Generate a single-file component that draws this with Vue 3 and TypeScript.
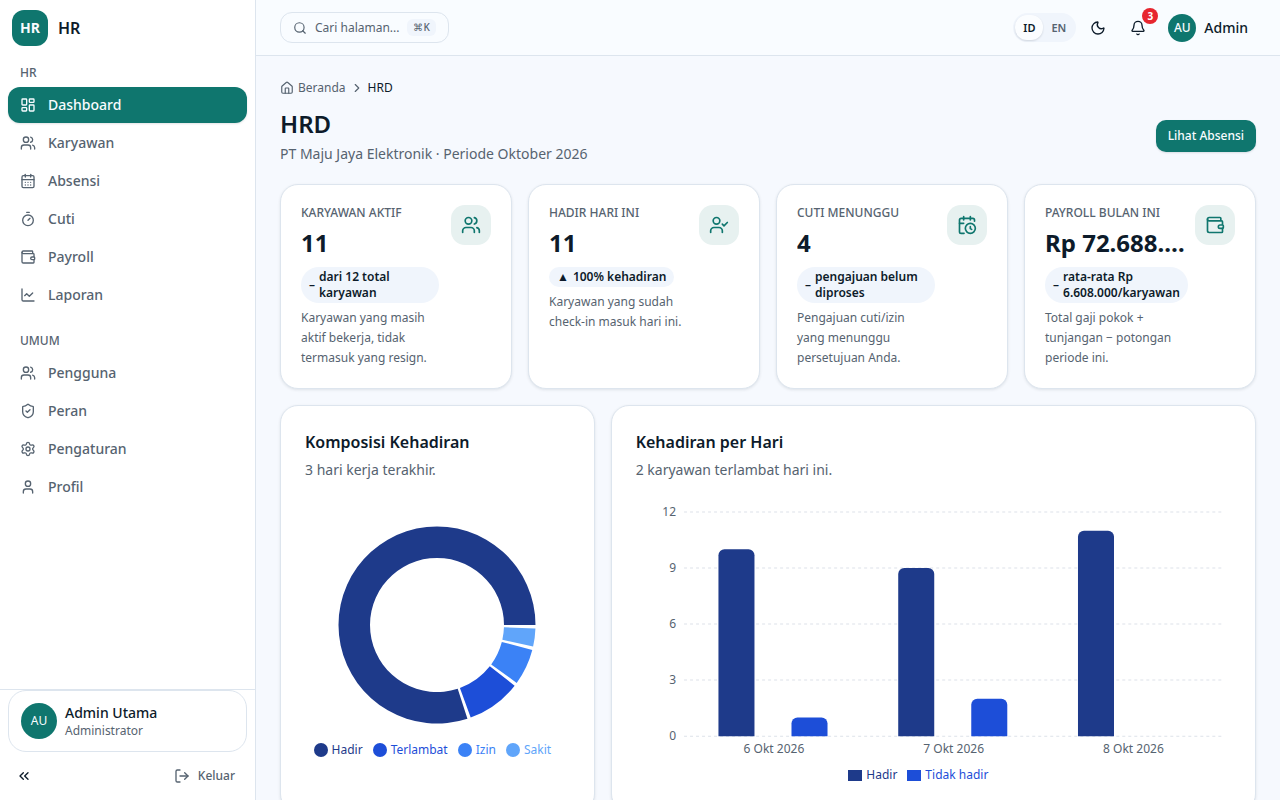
<script setup lang="ts">
import { computed, ref } from 'vue'

type IconName =
  | 'dashboard' | 'users' | 'calendar' | 'timer' | 'wallet' | 'chart' | 'shield' | 'settings'
  | 'user' | 'userCheck' | 'calendarClock' | 'moon' | 'bell' | 'search' | 'home'
  | 'chevronRight' | 'chevronsLeft' | 'logout'

const icons: Record<IconName, string[]> = {
  dashboard: [
    'M4 3h5a1 1 0 0 1 1 1v7a1 1 0 0 1-1 1H4a1 1 0 0 1-1-1V4a1 1 0 0 1 1-1z',
    'M15 3h5a1 1 0 0 1 1 1v3a1 1 0 0 1-1 1h-5a1 1 0 0 1-1-1V4a1 1 0 0 1 1-1z',
    'M15 12h5a1 1 0 0 1 1 1v7a1 1 0 0 1-1 1h-5a1 1 0 0 1-1-1v-7a1 1 0 0 1 1-1z',
    'M4 16h5a1 1 0 0 1 1 1v3a1 1 0 0 1-1 1H4a1 1 0 0 1-1-1v-3a1 1 0 0 1 1-1z',
  ],
  users: [
    'M16 21v-2a4 4 0 0 0-4-4H6a4 4 0 0 0-4 4v2',
    'M5 7a4 4 0 1 0 8 0a4 4 0 1 0-8 0',
    'M22 21v-2a4 4 0 0 0-3-3.87',
    'M16 3.13a4 4 0 0 1 0 7.75',
  ],
  calendar: [
    'M8 2v4', 'M16 2v4',
    'M5 4h14a2 2 0 0 1 2 2v14a2 2 0 0 1-2 2H5a2 2 0 0 1-2-2V6a2 2 0 0 1 2-2z',
    'M3 10h18', 'M8 14h.01', 'M12 14h.01', 'M16 14h.01', 'M8 18h.01', 'M12 18h.01', 'M16 18h.01',
  ],
  timer: ['M10 2h4', 'M12 14l3-3', 'M4 14a8 8 0 1 0 16 0a8 8 0 1 0-16 0'],
  wallet: [
    'M19 7V4a1 1 0 0 0-1-1H5a2 2 0 0 0 0 4h15a1 1 0 0 1 1 1v4h-3a2 2 0 0 0 0 4h3a1 1 0 0 0 1-1v-2a1 1 0 0 0-1-1',
    'M3 5v14a2 2 0 0 0 2 2h15a1 1 0 0 0 1-1v-4',
  ],
  chart: ['M3 3v16a2 2 0 0 0 2 2h16', 'm19 9-5 5-4-4-3 3'],
  shield: [
    'M20 13c0 5-3.5 7.5-7.66 8.95a1 1 0 0 1-.67-.01C7.5 20.5 4 18 4 13V6a1 1 0 0 1 1-1c2 0 4.5-1.2 6.24-2.72a1.17 1.17 0 0 1 1.52 0C14.51 3.81 17 5 19 5a1 1 0 0 1 1 1z',
    'm9 12 2 2 4-4',
  ],
  settings: [
    'M9.671 4.136a2.34 2.34 0 0 1 4.659 0 2.34 2.34 0 0 0 3.319 1.915 2.34 2.34 0 0 1 2.33 4.033 2.34 2.34 0 0 0 0 3.831 2.34 2.34 0 0 1-2.33 4.033 2.34 2.34 0 0 0-3.319 1.915 2.34 2.34 0 0 1-4.659 0 2.34 2.34 0 0 0-3.32-1.915 2.34 2.34 0 0 1-2.33-4.033 2.34 2.34 0 0 0 0-3.831A2.34 2.34 0 0 1 6.35 6.051a2.34 2.34 0 0 0 3.319-1.915',
    'M9 12a3 3 0 1 0 6 0a3 3 0 1 0-6 0',
  ],
  user: ['M19 21v-2a4 4 0 0 0-4-4H9a4 4 0 0 0-4 4v2', 'M8 7a4 4 0 1 0 8 0a4 4 0 1 0-8 0'],
  userCheck: ['m16 11 2 2 4-4', 'M16 21v-2a4 4 0 0 0-4-4H6a4 4 0 0 0-4 4v2', 'M5 7a4 4 0 1 0 8 0a4 4 0 1 0-8 0'],
  calendarClock: [
    'M16 14v2.2l1.6 1', 'M16 2v4', 'M21 7.5V6a2 2 0 0 0-2-2H5a2 2 0 0 0-2 2v14a2 2 0 0 0 2 2h3.5',
    'M3 10h5', 'M8 2v4', 'M10 16a6 6 0 1 0 12 0a6 6 0 1 0-12 0',
  ],
  moon: ['M20.985 12.486a9 9 0 1 1-9.473-9.472c.405-.022.617.46.402.803a6 6 0 0 0 8.268 8.268c.344-.215.825-.004.803.401'],
  bell: [
    'M10.268 21a2 2 0 0 0 3.464 0',
    'M3.262 15.326A1 1 0 0 0 4 17h16a1 1 0 0 0 .74-1.673C19.41 13.956 18 12.499 18 8A6 6 0 0 0 6 8c0 4.499-1.411 5.956-2.738 7.326',
  ],
  search: ['m21 21-4.34-4.34', 'M3 11a8 8 0 1 0 16 0a8 8 0 1 0-16 0'],
  home: [
    'M15 21v-8a1 1 0 0 0-1-1h-4a1 1 0 0 0-1 1v8',
    'M3 10a2 2 0 0 1 .709-1.528l7-5.999a2 2 0 0 1 2.582 0l7 5.999A2 2 0 0 1 21 10v9a2 2 0 0 1-2 2H5a2 2 0 0 1-2-2z',
  ],
  chevronRight: ['m9 18 6-6-6-6'],
  chevronsLeft: ['m11 17-5-5 5-5', 'm18 17-5-5 5-5'],
  logout: ['m16 17 5-5-5-5', 'M21 12H9', 'M9 21H5a2 2 0 0 1-2-2V5a2 2 0 0 1 2-2h4'],
}

interface NavItem { label: string; icon: IconName }
interface NavSection { title: string; items: NavItem[] }

const sections: NavSection[] = [
  {
    title: 'HR',
    items: [
      { label: 'Dashboard', icon: 'dashboard' },
      { label: 'Karyawan', icon: 'users' },
      { label: 'Absensi', icon: 'calendar' },
      { label: 'Cuti', icon: 'timer' },
      { label: 'Payroll', icon: 'wallet' },
      { label: 'Laporan', icon: 'chart' },
    ],
  },
  {
    title: 'UMUM',
    items: [
      { label: 'Pengguna', icon: 'users' },
      { label: 'Peran', icon: 'shield' },
      { label: 'Pengaturan', icon: 'settings' },
      { label: 'Profil', icon: 'user' },
    ],
  },
]
const active = ref('Dashboard')
const lang = ref<'ID' | 'EN'>('ID')
const langs = ['ID', 'EN'] as const

interface Stat { label: string; value: string; mark: string; note: string; text: string; icon: IconName }
const stats: Stat[] = [
  { label: 'KARYAWAN AKTIF', value: '11', mark: '–', note: 'dari 12 total karyawan', text: 'Karyawan yang masih aktif bekerja, tidak termasuk yang resign.', icon: 'users' },
  { label: 'HADIR HARI INI', value: '11', mark: '▲', note: '100% kehadiran', text: 'Karyawan yang sudah check-in masuk hari ini.', icon: 'userCheck' },
  { label: 'CUTI MENUNGGU', value: '4', mark: '–', note: 'pengajuan belum diproses', text: 'Pengajuan cuti/izin yang menunggu persetujuan Anda.', icon: 'calendarClock' },
  { label: 'PAYROLL BULAN INI', value: 'Rp 72.688.000', mark: '–', note: 'rata-rata Rp 6.608.000/karyawan', text: 'Total gaji pokok + tunjangan − potongan periode ini.', icon: 'wallet' },
]

const composition = [
  { label: 'Hadir', value: 27, color: '#1e3a8a' },
  { label: 'Terlambat', value: 3, color: '#1d4ed8' },
  { label: 'Izin', value: 2, color: '#3b82f6' },
  { label: 'Sakit', value: 1, color: '#60a5fa' },
]

/* Ring sectors run counter-clockwise from three o'clock with a 2 degree gap. */
const sectors = computed(() => {
  const outer = 98.5
  const inner = 67
  const gap = 2
  const total = composition.reduce((sum, c) => sum + c.value, 0)
  const at = (r: number, deg: number) => {
    const a = (deg * Math.PI) / 180
    return `${(100 + r * Math.cos(a)).toFixed(2)} ${(100 - r * Math.sin(a)).toFixed(2)}`
  }
  let start = 0
  return composition.map((c) => {
    const sweep = (c.value / total) * (360 - gap * composition.length)
    const end = start + sweep
    const large = sweep > 180 ? 1 : 0
    const d = `M${at(outer, start)}A${outer} ${outer} 0 ${large} 0 ${at(outer, end)}L${at(inner, end)}A${inner} ${inner} 0 ${large} 1 ${at(inner, start)}Z`
    start = end + gap
    return { label: c.label, color: c.color, d }
  })
})

const days = [
  { label: '6 Okt 2026', present: 10, absent: 1 },
  { label: '7 Okt 2026', present: 9, absent: 2 },
  { label: '8 Okt 2026', present: 11, absent: 0 },
]
const plot = { left: 48, right: 587, top: 8, bottom: 232, max: 12 }
const yOf = (v: number) => plot.bottom - (v / plot.max) * (plot.bottom - plot.top)
const ticks = [0, 3, 6, 9, 12].map((v) => ({ v, y: yOf(v) }))
const barPath = (x: number, v: number) => {
  const w = 36
  const r = 6
  const y = yOf(v)
  return `M${x} ${plot.bottom}V${y + r}a${r} ${r} 0 0 1 ${r} ${-r}h${w - 2 * r}a${r} ${r} 0 0 1 ${r} ${r}V${plot.bottom}Z`
}
const groups = computed(() => {
  const band = (plot.right - plot.left) / days.length
  return days.map((d, i) => {
    const x = plot.left + band * i
    return {
      label: d.label,
      center: x + band / 2,
      present: barPath(x + 34.4, d.present),
      absent: d.absent > 0 ? barPath(x + 107.4, d.absent) : '',
    }
  })
})
</script>

<template>
  <div class="shell">
    <aside class="sidebar">
      <div class="brand">
        <span class="brand-mark">HR</span>
        <span class="brand-name">HR</span>
      </div>
      <nav class="nav" aria-label="Menu utama">
        <section v-for="s in sections" :key="s.title" class="nav-section">
          <h2 class="nav-title">{{ s.title }}</h2>
          <ul class="nav-list">
            <li v-for="item in s.items" :key="item.label">
              <a href="#" class="nav-link" :class="{ active: active === item.label }" @click.prevent="active = item.label">
                <svg class="icon i16" viewBox="0 0 24 24" aria-hidden="true"><path v-for="p in icons[item.icon]" :key="p" :d="p" /></svg>
                {{ item.label }}
              </a>
            </li>
          </ul>
        </section>
      </nav>
      <div class="side-foot">
        <a href="#" class="user-card">
          <span class="avatar a36">AU</span>
          <span class="user-text">
            <span class="user-name">Admin Utama</span>
            <span class="user-role">Administrator</span>
          </span>
        </a>
        <div class="foot-row">
          <button type="button" class="collapse" aria-label="Ciutkan menu">
            <svg class="icon i16" viewBox="0 0 24 24" aria-hidden="true"><path v-for="p in icons.chevronsLeft" :key="p" :d="p" /></svg>
          </button>
          <button type="button" class="logout">
            <svg class="icon i16" viewBox="0 0 24 24" aria-hidden="true"><path v-for="p in icons.logout" :key="p" :d="p" /></svg>
            Keluar
          </button>
        </div>
      </div>
    </aside>

    <div class="page">
      <header class="topbar">
        <button type="button" class="search">
          <svg class="icon i14" viewBox="0 0 24 24" aria-hidden="true"><path v-for="p in icons.search" :key="p" :d="p" /></svg>
          <span>Cari halaman...</span>
          <kbd>⌘K</kbd>
        </button>
        <div class="tools">
          <div class="langs">
            <button v-for="l in langs" :key="l" type="button" :class="{ on: lang === l }" @click="lang = l">{{ l }}</button>
          </div>
          <button type="button" class="tool" aria-label="Mode gelap">
            <svg class="icon i16" viewBox="0 0 24 24" aria-hidden="true"><path v-for="p in icons.moon" :key="p" :d="p" /></svg>
          </button>
          <button type="button" class="tool" aria-label="Notifikasi">
            <svg class="icon i16" viewBox="0 0 24 24" aria-hidden="true"><path v-for="p in icons.bell" :key="p" :d="p" /></svg>
            <span class="count">3</span>
          </button>
          <button type="button" class="account">
            <span class="avatar a28">AU</span>
            Admin
          </button>
        </div>
      </header>

      <main class="content">
        <nav class="crumbs" aria-label="Breadcrumb">
          <a href="#" class="crumb">
            <svg class="icon i14" viewBox="0 0 24 24" aria-hidden="true"><path v-for="p in icons.home" :key="p" :d="p" /></svg>
            Beranda
          </a>
          <svg class="icon i14" viewBox="0 0 24 24" aria-hidden="true"><path v-for="p in icons.chevronRight" :key="p" :d="p" /></svg>
          <span class="crumb-now">HRD</span>
        </nav>
        <div class="heading">
          <div>
            <h1>HRD</h1>
            <p>PT Maju Jaya Elektronik · Periode Oktober 2026</p>
          </div>
          <button type="button" class="primary">Lihat Absensi</button>
        </div>

        <div class="stats">
          <article v-for="s in stats" :key="s.label" class="card stat">
            <div class="stat-body">
              <h2 class="stat-label">{{ s.label }}</h2>
              <p class="stat-value">{{ s.value }}</p>
              <p class="pill"><span>{{ s.mark }}</span><span>{{ s.note }}</span></p>
              <p class="stat-text">{{ s.text }}</p>
            </div>
            <span class="stat-icon">
              <svg class="icon i20" viewBox="0 0 24 24" aria-hidden="true"><path v-for="p in icons[s.icon]" :key="p" :d="p" /></svg>
            </span>
          </article>
        </div>

        <div class="charts">
          <section class="card chart">
            <h2>Komposisi Kehadiran</h2>
            <p>3 hari kerja terakhir.</p>
            <div class="ring">
              <svg viewBox="0 0 200 200" role="img" aria-label="Komposisi Kehadiran">
                <path v-for="s in sectors" :key="s.label" :d="s.d" :fill="s.color" />
              </svg>
              <ul class="legend">
                <li v-for="c in composition" :key="c.label" :style="{ color: c.color }"><i class="dot"></i>{{ c.label }}</li>
              </ul>
            </div>
          </section>
          <section class="card chart wide">
            <h2>Kehadiran per Hari</h2>
            <p>2 karyawan terlambat hari ini.</p>
            <div class="bars">
              <svg viewBox="0 0 595 259" role="img" aria-label="Kehadiran per Hari">
                <g v-for="t in ticks" :key="t.v">
                  <line :x1="plot.left" :x2="plot.right" :y1="t.y" :y2="t.y" class="grid-line" />
                  <text x="40" :y="t.y + 4" text-anchor="end">{{ t.v }}</text>
                </g>
                <g v-for="g in groups" :key="g.label">
                  <path :d="g.present" fill="#1e3a8a" />
                  <path v-if="g.absent" :d="g.absent" fill="#1d4ed8" />
                  <text :x="g.center" y="249" text-anchor="middle">{{ g.label }}</text>
                </g>
              </svg>
              <ul class="legend">
                <li class="present"><i class="swatch"></i>Hadir</li>
                <li class="absent"><i class="swatch"></i>Tidak hadir</li>
              </ul>
            </div>
          </section>
        </div>
      </main>
    </div>
  </div>
</template>

<style>
html { scrollbar-width: none; }
body { margin: 0; background: #f6f9fe; }
</style>

<style scoped>
.shell {
  --ink: #0d1b2a;
  --muted: #566370;
  --line: #dde5ee;
  --brand: #0f766e;
  --tint: #f0f5fc;
  display: flex;
  min-height: 100vh;
  font-family: "Noto Sans", "Liberation Sans", sans-serif;
  font-size: 14px;
  line-height: 20px;
  color: var(--ink);
}
*, *::before, *::after { box-sizing: border-box; }
h1, h2, p, ul { margin: 0; padding: 0; }
ul { list-style: none; }
a { color: inherit; text-decoration: none; }
button { font: inherit; color: inherit; background: none; border: 0; padding: 0; cursor: pointer; }
.icon { flex: none; fill: none; stroke: currentColor; stroke-width: 2; stroke-linecap: round; stroke-linejoin: round; }
.i14 { width: 14px; height: 14px; }
.i16 { width: 16px; height: 16px; }
.i20 { width: 20px; height: 20px; }

.sidebar {
  position: sticky;
  top: 0;
  flex: none;
  display: flex;
  flex-direction: column;
  width: 256px;
  height: 100vh;
  background: #fff;
  border-right: 1px solid var(--line);
}
.brand { display: flex; align-items: center; gap: 10px; height: 56px; padding: 0 12px; }
.brand-mark {
  display: grid;
  place-items: center;
  width: 36px;
  height: 36px;
  border-radius: 12px;
  background: var(--brand);
  color: #f8fcff;
  font-weight: 700;
}
.brand-name { font-size: 16px; font-weight: 600; }
.nav { flex: 1; overflow: hidden; padding: 9px 8px; }
.nav-section + .nav-section { margin-top: 20px; }
.nav-title { padding: 0 12px 6px; font-size: 12px; line-height: 16px; font-weight: 500; color: var(--muted); }
.nav-list { display: grid; gap: 2px; }
.nav-link {
  display: flex;
  align-items: center;
  gap: 12px;
  height: 36px;
  padding: 0 12px;
  border-radius: 12px;
  font-weight: 500;
  color: var(--muted);
}
.nav-link.active { background: var(--brand); color: #f8fcff; box-shadow: 0 1px 2px rgba(13, 27, 42, 0.12); }
.side-foot { border-top: 1px solid var(--line); padding: 0 8px 8px; }
.user-card {
  display: flex;
  align-items: center;
  gap: 8px;
  padding: 12px;
  border: 1px solid var(--line);
  border-radius: 18px;
}
.avatar {
  flex: none;
  display: grid;
  place-items: center;
  border-radius: 50%;
  background: var(--brand);
  color: #f8fcff;
  font-size: 12px;
  line-height: 16px;
  font-weight: 400;
}
.a36 { width: 36px; height: 36px; }
.a28 { width: 28px; height: 28px; font-weight: 500; }
.user-text { display: grid; }
.user-name { font-weight: 500; }
.user-role { font-size: 12px; line-height: 16px; color: var(--muted); }
.foot-row { display: flex; justify-content: space-between; margin-top: 8px; }
.collapse { display: grid; place-items: center; width: 32px; height: 32px; }
.logout {
  display: flex;
  align-items: center;
  gap: 8px;
  height: 32px;
  padding: 0 12px;
  font-size: 12px;
  font-weight: 500;
  color: var(--muted);
}

.page { flex: 1; min-width: 0; }
.topbar {
  position: sticky;
  top: 0;
  z-index: 1;
  display: flex;
  align-items: center;
  justify-content: space-between;
  height: 56px;
  padding: 0 24px;
  background: #f9fcff;
  border-bottom: 1px solid var(--line);
}
.search {
  display: flex;
  align-items: center;
  gap: 8px;
  height: 31px;
  padding: 0 12px;
  border: 1px solid var(--line);
  border-radius: 12px;
  font-size: 12px;
  color: var(--muted);
}
.search kbd {
  padding: 0 6px;
  border-radius: 6px;
  background: var(--tint);
  font: 500 10px/17px "Noto Sans", "Liberation Sans", sans-serif;
}
.tools { display: flex; align-items: center; gap: 4px; }
.langs { display: flex; padding: 2px; border-radius: 15px; background: var(--tint); }
.langs button {
  height: 25px;
  padding: 0 8px;
  border-radius: 12px;
  font-size: 11px;
  font-weight: 600;
  color: var(--muted);
}
.langs .on { background: #fbfdff; color: var(--ink); box-shadow: 0 1px 2px rgba(13, 27, 42, 0.14); }
.tool { position: relative; display: grid; place-items: center; width: 36px; height: 36px; }
.count {
  position: absolute;
  top: -2px;
  right: -2px;
  width: 16px;
  height: 16px;
  border-radius: 50%;
  background: #e7262f;
  color: #fff;
  font-size: 10px;
  line-height: 16px;
  font-weight: 700;
  text-align: center;
}
.account { display: flex; align-items: center; gap: 8px; height: 36px; padding: 0 8px; font-weight: 500; }

.content { padding: 24px; }
.crumbs { display: flex; align-items: center; gap: 4px; font-size: 12px; line-height: 16px; color: var(--muted); }
.crumb { display: flex; align-items: center; gap: 4px; }
.crumb-now { color: var(--ink); }
.heading { display: flex; align-items: center; justify-content: space-between; gap: 16px; margin: 12px 0 20px; }
.heading h1 { font-size: 24px; line-height: 32px; font-weight: 600; }
.heading p { margin-top: 4px; color: var(--muted); }
.primary {
  height: 32px;
  padding: 0 12px;
  border-radius: 10px;
  background: var(--brand);
  color: #f8fcff;
  font-size: 12px;
  font-weight: 500;
  box-shadow: 0 1px 2px rgba(13, 27, 42, 0.12);
}

.card {
  background: #fff;
  border: 1px solid var(--line);
  border-radius: 18px;
  box-shadow: 0 1px 3px rgba(13, 27, 42, 0.1);
}
.stats { display: grid; grid-template-columns: repeat(4, minmax(0, 1fr)); gap: 16px; }
.stat { display: flex; align-items: flex-start; gap: 12px; padding: 20px; }
.stat-body { flex: 1; min-width: 0; }
.stat-label { font-size: 12px; line-height: 16px; font-weight: 500; color: var(--muted); white-space: nowrap; }
.stat-value {
  margin: 6px -8px 0 0;
  font-size: 24px;
  line-height: 32px;
  font-weight: 700;
  overflow: hidden;
  text-overflow: ellipsis;
  white-space: nowrap;
}
.pill {
  display: flex;
  align-items: center;
  gap: 4px;
  width: fit-content;
  min-width: min-content;
  margin-top: 8px;
  padding: 2px 8px;
  border-radius: 18px;
  background: var(--tint);
  font-size: 12px;
  line-height: 16px;
  font-weight: 600;
}
.stat-text { margin-top: 5px; font-size: 12px; color: var(--muted); }
.stat-icon {
  flex: none;
  display: grid;
  place-items: center;
  width: 40px;
  height: 40px;
  border-radius: 14px;
  background: #e7f1f0;
  color: var(--brand);
}

.charts { display: grid; grid-template-columns: repeat(3, minmax(0, 1fr)); gap: 16px; margin-top: 16px; }
.chart { padding: 24px; }
.wide { grid-column: span 2; }
.chart h2 { font-size: 16px; line-height: 24px; font-weight: 600; }
.chart p { margin-top: 6px; color: var(--muted); }
.ring { display: flex; flex-direction: column; align-items: center; padding-top: 45px; }
.ring svg { width: 200px; height: 200px; }
.ring .legend { margin-top: 13px; }
.bars { padding-top: 24px; }
.bars svg { display: block; width: 100%; height: auto; overflow: visible; }
.bars text { font-size: 12px; fill: var(--muted); }
.grid-line { stroke: #dde2e9; stroke-dasharray: 3 3; }
.legend { display: flex; justify-content: center; font-size: 12px; line-height: 24px; }
.legend li { display: flex; align-items: center; gap: 4px; margin-right: 10px; }
.bars .legend { padding-right: 20px; }
.dot { width: 14px; height: 14px; border-radius: 50%; background: currentColor; }
.swatch { width: 14px; height: 11px; background: currentColor; }
.present { color: #1e3a8a; }
.absent { color: #1d4ed8; }
</style>
